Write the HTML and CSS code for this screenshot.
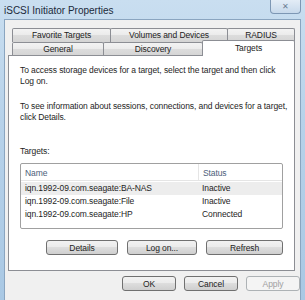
FILE: index.html
```html
<!DOCTYPE html>
<html lang="en">
<head>
    <meta charset="UTF-8">
    <title>iSCSI Initiator Properties</title>
    <link rel="stylesheet" href="styles.css">
</head>
<body>

<div class="window">
    <div class="titlebar">
        <span class="title">iSCSI Initiator Properties</span>
        <span class="close">&#x2715;</span>
    </div>

    <div class="client">
        <div class="tabs">
            <div class="tab-row">
                <div class="tab w-fav">Favorite Targets</div>
                <div class="tab w-vol">Volumes and Devices</div>
                <div class="tab w-rad">RADIUS</div>
            </div>
            <div class="tab-row">
                <div class="tab w-gen">General</div>
                <div class="tab w-dis">Discovery</div>
                <div class="tab w-tar active">Targets</div>
            </div>
        </div>

        <div class="panel">
            <p class="para">To access storage devices for a target, select the target and then click<br>Log on.</p>
            <p class="para">To see information about sessions, connections, and devices for a target,<br>click Details.</p>

            <div class="label">Targets:</div>
            <div class="list">
                <div class="list-head">
                    <span class="col-name">Name</span>
                    <span class="col-status">Status</span>
                </div>
                <div class="list-row hover">
                    <span class="col-name">iqn.1992-09.com.seagate:BA-NAS</span>
                    <span class="col-status">Inactive</span>
                </div>
                <div class="list-row">
                    <span class="col-name">iqn.1992-09.com.seagate:File</span>
                    <span class="col-status">Inactive</span>
                </div>
                <div class="list-row">
                    <span class="col-name">iqn.1992-09.com.seagate:HP</span>
                    <span class="col-status">Connected</span>
                </div>
            </div>

            <div class="panel-buttons">
                <button class="btn w-detail">Details</button>
                <button class="btn w-logon">Log on...</button>
                <button class="btn w-refresh">Refresh</button>
            </div>
        </div>

        <div class="dialog-buttons">
            <button class="btn w-small">OK</button>
            <button class="btn w-small">Cancel</button>
            <button class="btn w-small disabled">Apply</button>
        </div>
    </div>
</div>

</body>
</html>
```

FILE: styles.css
```css
body {
    margin: 0;
    padding: 0;
    font-family: 'Liberation Sans', Arial, sans-serif;
    font-size: 8.5px;
    letter-spacing: -0.1px;
    color: #1e1e1e;
    background: #ffffff;
}
.window {
    width: 305px;
    height: 300px;
    background: linear-gradient(180deg, #c9def0 0%, #b7d2ea 40%, #a9c8e4 100%);
    overflow: hidden;
}
.titlebar {
    height: 19px;
    display: flex;
    justify-content: space-between;
    align-items: flex-start;
}
.title {
    font-size: 10px;
    letter-spacing: 0;
    color: #1b2a3a;
    padding: 5px 0 0 4px;
}
.close {
    width: 29px;
    height: 13px;
    margin-right: 4px;
    border: 1px solid #7d97b4;
    border-top: none;
    border-radius: 0 0 4px 4px;
    background: linear-gradient(180deg, #e3ecf6, #c7d9eb);
    color: #6a7d92;
    font-size: 8px;
    display: flex;
    align-items: center;
    justify-content: center;
}
.client {
    margin: 0 4px 0 4px;
    height: 290px;
    background: #f0f0f0;
    border: 1px solid #8aa5c0;
    border-bottom: none;
    padding-top: 8px;
    box-sizing: border-box;
}
.tabs {
    padding-left: 7px;
}
.tab-row {
    display: flex;
    height: 14px;
}
.tab {
    box-sizing: border-box;
    height: 14px;
    border: 1px solid #8c8e94;
    border-bottom: none;
    border-radius: 2px 2px 0 0;
    background: linear-gradient(180deg, #f3f3f3 0%, #ebebeb 45%, #dcdcdc 50%, #d4d4d4 100%);
    text-align: center;
    line-height: 12px;
    color: #222;
    margin-right: -1px;
}
.tab.active {
    background: #ffffff;
    height: 16px;
    margin-top: -2px;
    position: relative;
    z-index: 2;
    line-height: 14px;
}
.w-fav { width: 99px; }
.w-vol { width: 118px; }
.w-rad { width: 68px; }
.w-gen { width: 92px; }
.w-dis { width: 100px; }
.w-tar { width: 93px; }

.panel {
    margin: -1px 5px 0 3px;
    height: 216px;
    box-sizing: border-box;
    background: #ffffff;
    border: 1px solid #8c8e94;
    padding: 9px 11px 0 11px;
    position: relative;
    z-index: 1;
}
.para {
    margin: 0 0 14px 0;
    line-height: 11px;
    white-space: nowrap;
}
.label {
    margin-top: 23px;
    line-height: 11px;
}
.list {
    margin-top: 6px;
    height: 66px;
    box-sizing: border-box;
    border: 1px solid #a0a0a0;
    border-radius: 2px;
}
.list-head,
.list-row {
    display: flex;
    height: 13px;
    line-height: 13px;
    padding-left: 4px;
}
.list-head {
    height: 16px;
    line-height: 19px;
    border-bottom: 1px solid #e5e5e5;
    margin-bottom: 1px;
    color: #4c607a;
}
.list-row.hover {
    background: #ededed;
}
.col-name {
    width: 177px;
}
.list-head .col-name {
    border-right: 1px solid #e5e5e5;
    margin-right: 4px;
    width: 173px;
}
.panel-buttons {
    display: flex;
    gap: 9px;
    margin: 11px 0 0 26px;
}
.btn {
    font-family: 'Liberation Sans', Arial, sans-serif;
    font-size: 8.5px;
    letter-spacing: -0.1px;
    height: 15px;
    padding: 0;
    border: 1px solid #707070;
    border-radius: 3px;
    background: linear-gradient(180deg, #f2f2f2 0%, #ebebeb 45%, #dddddd 50%, #cfcfcf 100%);
    color: #1e1e1e;
}
.w-detail { width: 73px; }
.w-logon { width: 71px; }
.w-refresh { width: 78px; }
.dialog-buttons {
    display: flex;
    justify-content: flex-end;
    gap: 8px;
    padding: 5px 0 0 0;
}
.w-small { width: 54px; }
.btn.disabled {
    background: #f4f4f4;
    border-color: #adb2b5;
    color: #a0a0a0;
}
```
